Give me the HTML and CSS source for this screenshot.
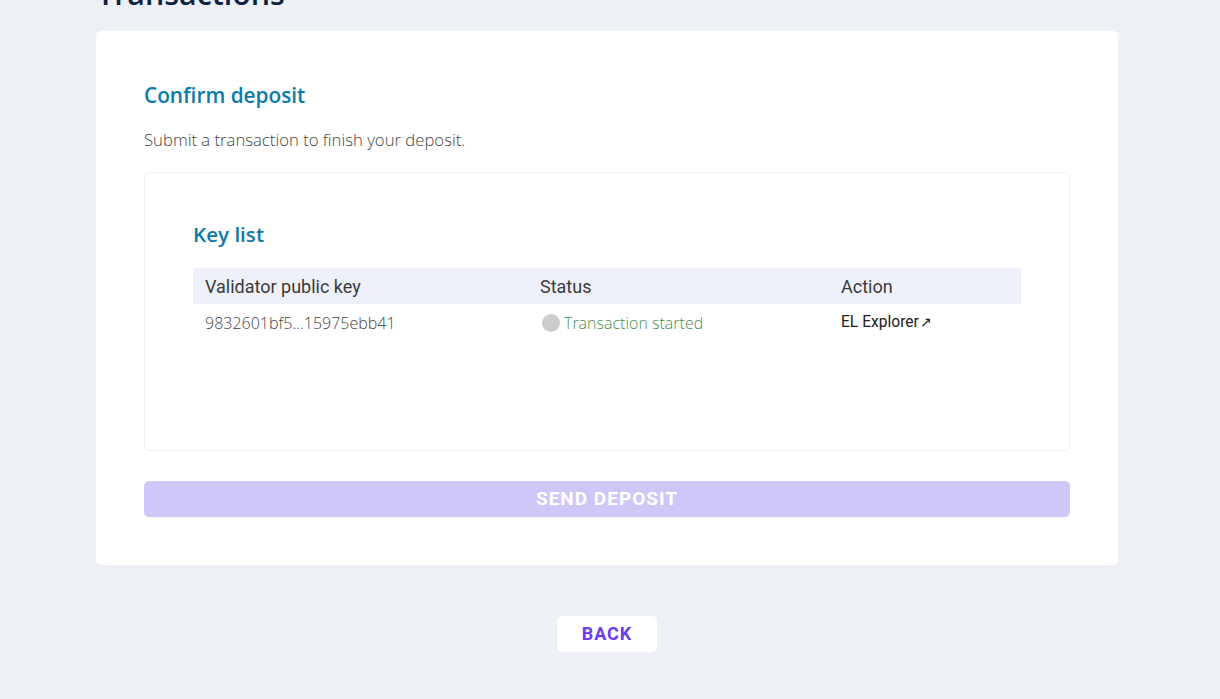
FILE: index.html
```html
<!DOCTYPE html>
<html lang="en">
<head>
<meta charset="utf-8">
<title>Transactions</title>
<link rel="stylesheet" href="styles.css">
</head>
<body>
<main class="page">
  <h1 class="page-title">Transactions</h1>
  <section class="card">
    <h2 class="card-title">Confirm deposit</h2>
    <p class="card-sub">Submit a transaction to finish your deposit.</p>
    <div class="keybox">
      <h3 class="keybox-title">Key list</h3>
      <div class="table">
        <div class="row head">
          <div class="cell">Validator public key</div>
          <div class="cell">Status</div>
          <div class="cell">Action</div>
        </div>
        <div class="row data">
          <div class="cell key">9832601bf5...15975ebb41</div>
          <div class="cell status"><span class="dot"></span>Transaction started</div>
          <div class="cell action"><a class="link">EL Explorer<span class="arrow">↗</span></a></div>
        </div>
      </div>
    </div>
    <button class="send" disabled>Send deposit</button>
  </section>
  <div class="back-wrap">
    <button class="back">Back</button>
  </div>
</main>
</body>
</html>
```

FILE: styles.css
```css
html, body {
  margin: 0;
  padding: 0;
  background: #edf0f5;
}
body {
  font-family: "Open Sans", "Noto Sans", sans-serif;
  overflow: hidden;
}
.page {
  width: 1022px;
  margin: -26px 0 0 96px;
}
.page-title {
  margin: 0 0 18px 1px;
  font-size: 30.4px;
  line-height: 39px;
  font-weight: 600;
  color: #0d2340;
}
.card {
  background: #fff;
  border-radius: 5px;
  padding: 50px 48px 48px;
}
.card-title {
  margin: 0;
  font-size: 20.8px;
  line-height: 28px;
  font-weight: 600;
  color: #0b7aa8;
}
.card-sub {
  margin: 19px 0 20px;
  font-size: 16.7px;
  line-height: 24px;
  font-weight: 300;
  color: #444;
}
.keybox {
  border: 1px solid #eeeeee;
  border-radius: 5px;
  padding: 47px 48px 0;
  height: 230px;
}
.keybox-title {
  margin: 0 0 20px;
  font-size: 20.6px;
  line-height: 28px;
  font-weight: 600;
  color: #0b7aa8;
}
.row {
  display: grid;
  grid-template-columns: 335px 301px 1fr;
  align-items: center;
}
.row.head {
  height: 36px;
  background: #eef1f9;
  font-family: Roboto, "Liberation Sans", sans-serif;
  font-size: 18px;
  color: #3a3a3a;
}
.row.data {
  height: 38px;
}
.cell {
  padding-left: 12px;
}
.key {
  font-size: 16px;
  font-weight: 300;
  color: #444;
}
.status {
  display: flex;
  align-items: center;
  font-size: 16px;
  font-weight: 300;
  color: #4b8a55;
}
.dot {
  width: 18px;
  height: 18px;
  border-radius: 50%;
  background: #cccccc;
  margin: 0 4px 0 2px;
}
.action {
  font-family: Roboto, "Liberation Sans", sans-serif;
  font-size: 15.6px;
  color: #222;
  margin-top: -3px;
}
.arrow {
  font-size: 14px;
  margin-left: 1px;
}
.send {
  display: block;
  width: 100%;
  height: 36px;
  margin-top: 30px;
  border: 0;
  border-radius: 5px;
  background: #d0c7f9;
  color: #fff;
  font-family: Roboto, "Liberation Sans", sans-serif;
  font-weight: 700;
  font-size: 19px;
  letter-spacing: 1px;
  text-transform: uppercase;
  padding: 0 0 2px;
}
.back-wrap {
  display: flex;
  justify-content: center;
  margin-top: 51px;
}
.back {
  height: 36px;
  width: 100px;
  border: 0;
  border-radius: 5px;
  background: #fff;
  color: #6b3cf2;
  font-family: Roboto, "Liberation Sans", sans-serif;
  font-weight: 700;
  font-size: 18px;
  letter-spacing: 1px;
  text-transform: uppercase;
  padding: 0 0 2px;
}
```
